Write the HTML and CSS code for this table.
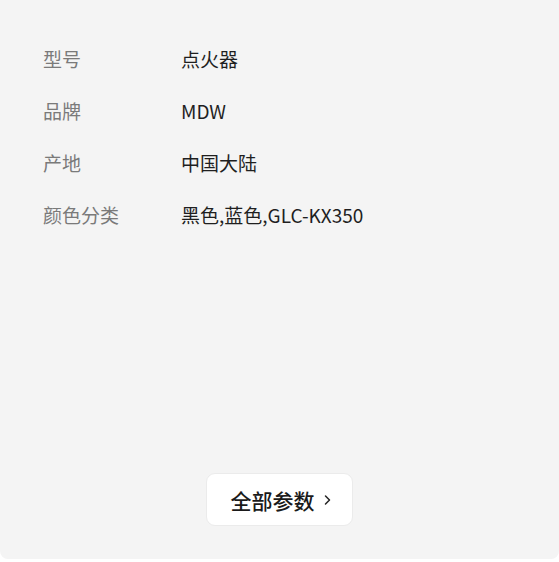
FILE: index.html
```html
<!DOCTYPE html>
<html lang="zh-CN">
<head>
  <meta charset="UTF-8" />
  <meta name="viewport" content="width=device-width, initial-scale=1.0" />
  <title>商品参数</title>
  <link rel="stylesheet" href="styles.css">
</head>
<body>
  <div class="params">
    <div class="row"><span class="label">型号</span><span class="value">点火器</span></div>
    <div class="row"><span class="label">品牌</span><span class="value">MDW</span></div>
    <div class="row"><span class="label">产地</span><span class="value">中国大陆</span></div>
    <div class="row"><span class="label">颜色分类</span><span class="value">黑色,蓝色,GLC-KX350</span></div>

    <div class="more">
      <button class="more-btn">全部参数
        <svg class="chevron" width="7" height="12" viewBox="0 0 7 12"><path d="M1.5 2l4 4-4 4" fill="none" stroke="#222" stroke-width="1.5" stroke-linecap="round" stroke-linejoin="round"/></svg>
      </button>
    </div>
  </div>
</body>
</html>
```
FILE: styles.css
```css
body {
  margin: 0;
  background: #ffffff;
  font-family: "Noto Sans CJK SC", "Noto Sans", sans-serif;
}
.params {
  box-sizing: border-box;
  width: 559px;
  height: 559px;
  padding: 32px 0 33px 43px;
  background: #f4f4f4;
  border-radius: 0 0 8px 8px;
  display: flex;
  flex-direction: column;
}
.row {
  display: flex;
  height: 52px;
  align-items: center;
  font-size: 19px;
}
.label {
  width: 138px;
  color: #7a7a7a;
}
.value {
  color: #1f1f1f;
}
.more {
  margin-top: auto;
  margin-left: -43px;
  display: flex;
  justify-content: center;
}
.more-btn {
  box-sizing: border-box;
  width: 147px;
  height: 53px;
  background: #ffffff;
  border: 1px solid #ebebeb;
  border-radius: 9px;
  font-family: inherit;
  font-size: 21px;
  font-weight: 500;
  color: #1a1a1a;
  display: flex;
  align-items: center;
  justify-content: center;
  gap: 9px;
  padding: 0 0 0 2px;
}
.chevron {
  margin-top: 1px;
}
```
